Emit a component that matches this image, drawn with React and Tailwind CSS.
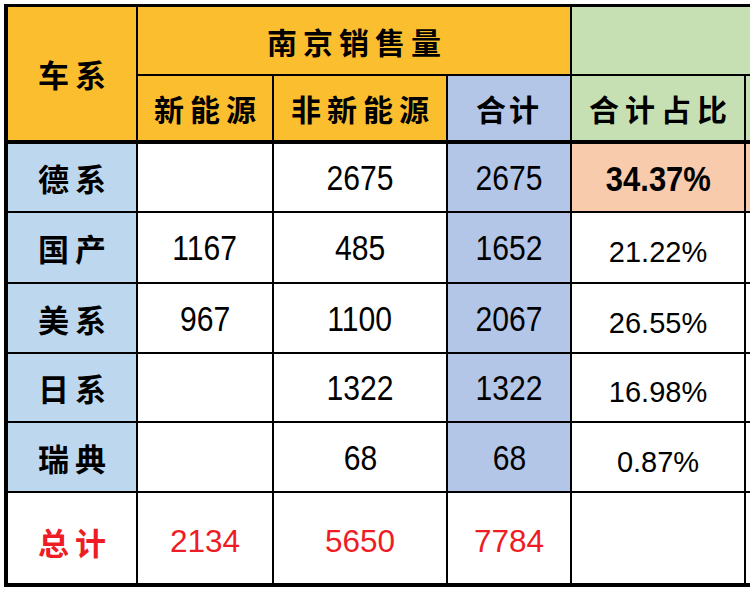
const ROWS = [
  { name: '德系', ev: '', ice: '2675', total: '2675', share: '34.37%', top: true },
  { name: '国产', ev: '1167', ice: '485', total: '1652', share: '21.22%' },
  { name: '美系', ev: '967', ice: '1100', total: '2067', share: '26.55%' },
  { name: '日系', ev: '', ice: '1322', total: '1322', share: '16.98%' },
  { name: '瑞典', ev: '', ice: '68', total: '68', share: '0.87%' },
];

const cjk = "font-['Noto_Sans_CJK_SC',sans-serif] font-bold leading-none";
const num = "font-['Liberation_Sans',Arial,sans-serif] leading-none";
const cell = 'flex items-center justify-center';

function Num({ children, className = '' }) {
  return (
    <span className={`${num} inline-block origin-center scale-x-[0.86] text-[35px] ${className}`}>
      {children}
    </span>
  );
}

export default function App() {
  return (
    <div className="h-[592px] w-[750px] overflow-hidden bg-white pl-[4px] pt-[4px] text-black">
      <div className="grid w-max grid-cols-[128px_134px_172px_122px_172px_80px] grid-rows-[67px_66px_67px_69px_68px_67px_68px_90px] gap-[2px] bg-black pb-[4px] pl-[4px] pt-[3px]">
        {/* header */}
        <div className={`${cell} row-span-2 mb-[2px] bg-[#fbbe2f]`}>
          <span className={`${cjk} pl-[6px] text-[31px] tracking-[6px]`}>车系</span>
        </div>
        <div className={`${cell} col-span-3 bg-[#fbbe2f]`}>
          <span className={`${cjk} pl-[6px] text-[30px] tracking-[6px]`}>南京销售量</span>
        </div>
        <div className="col-span-2 bg-[#c6e0b4]" />

        <div className={`${cell} mb-[2px] bg-[#fbbe2f]`}>
          <span className={`${cjk} pl-[6px] text-[30px] tracking-[6px]`}>新能源</span>
        </div>
        <div className={`${cell} mb-[2px] bg-[#fbbe2f]`}>
          <span className={`${cjk} pl-[6px] text-[30px] tracking-[6px]`}>非新能源</span>
        </div>
        <div className={`${cell} mb-[2px] bg-[#b4c6e7]`}>
          <span className={`${cjk} text-[30px] tracking-[3px]`}>合计</span>
        </div>
        <div className={`${cell} mb-[2px] bg-[#c6e0b4]`}>
          <span className={`${cjk} pl-[6px] text-[30px] tracking-[6px]`}>合计占比</span>
        </div>
        <div className="mb-[2px] bg-[#c6e0b4]" />

        {/* body */}
        {ROWS.map((row) => (
          <div key={row.name} className="contents">
            <div className={`${cell} bg-[#bdd7ee]`}>
              <span className={`${cjk} pl-[6px] text-[31px] tracking-[6px]`}>{row.name}</span>
            </div>
            <div className={`${cell} bg-white`}>{row.ev && <Num>{row.ev}</Num>}</div>
            <div className={`${cell} bg-white`}>
              <Num>{row.ice}</Num>
            </div>
            <div className={`${cell} bg-[#b4c6e7]`}>
              <Num>{row.total}</Num>
            </div>
            {row.top ? (
              <div className={`${cell} bg-[#f8cbad] pt-[2px]`}>
                <span className={`${num} inline-block scale-x-[0.885] text-[35px] font-bold`}>{row.share}</span>
              </div>
            ) : (
              <div className={`${cell} bg-white pt-[10px]`}>
                <span className={`${num} text-[29px]`}>{row.share}</span>
              </div>
            )}
            <div className={row.top ? 'bg-[#f8cbad]' : 'bg-white'} />
          </div>
        ))}

        {/* totals */}
        <div className={`${cell} bg-white pt-[6px]`}>
          <span className={`${cjk} pl-[6px] text-[31px] tracking-[6px] text-[#ee1c25]`}>总计</span>
        </div>
        <div className={`${cell} bg-white pt-[8px]`}>
          <span className={`${num} text-[31.5px] text-[#ee1c25]`}>2134</span>
        </div>
        <div className={`${cell} bg-white pt-[8px]`}>
          <span className={`${num} text-[31.5px] text-[#ee1c25]`}>5650</span>
        </div>
        <div className={`${cell} bg-white pt-[8px]`}>
          <span className={`${num} text-[31.5px] text-[#ee1c25]`}>7784</span>
        </div>
        <div className="bg-white" />
        <div className="bg-white" />
      </div>
    </div>
  );
}
